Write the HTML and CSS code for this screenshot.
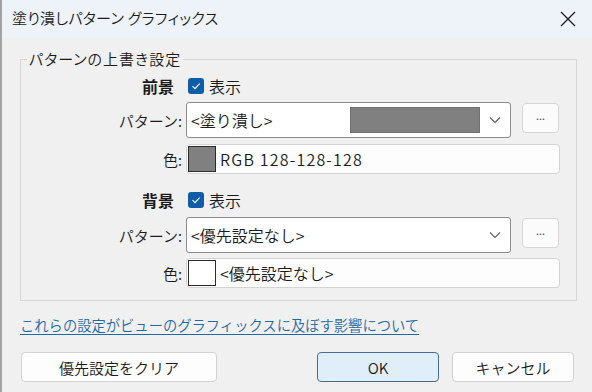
FILE: index.html
```html
<!DOCTYPE html>
<html lang="ja">

<head>
    <meta charset="UTF-8">
    <title>塗り潰しパターン グラフィックス</title>
    <link rel="stylesheet" href="styles.css">
</head>

<body>
    <div class="dialog">
        <header class="titlebar">
            <span class="title">塗り潰しパターン グラフィックス</span>
            <span class="close">
                <svg width="16" height="16" viewBox="0 0 16 16">
                    <path d="M1 1 L15 15 M15 1 L1 15" stroke="#1b1b1b" stroke-width="1.3" fill="none" />
                </svg>
            </span>
        </header>

        <main class="content">
            <fieldset class="group">
                <legend>パターンの上書き設定</legend>

                <div class="row head first">
                    <span class="label bold">前景</span>
                    <span class="check">
                        <svg width="10" height="10" viewBox="0 0 10 10">
                            <path d="M1.5 5.2 L4 7.6 L8.6 2.6" stroke="#fff" stroke-width="1.1" fill="none" />
                        </svg>
                    </span>
                    <span class="checktext">表示</span>
                </div>
                <div class="row pattern">
                    <span class="label">パターン:</span>
                    <div class="select">
                        <span class="value">&lt;塗り潰し&gt;</span>
                        <span class="preview"></span>
                        <span class="chevron">
                            <svg width="12" height="8" viewBox="0 0 12 8">
                                <path d="M1 1.5 L6 6.5 L11 1.5" stroke="#5f5f5f" stroke-width="1.1" fill="none" />
                            </svg>
                        </span>
                    </div>
                    <button class="more">...</button>
                </div>
                <div class="row color">
                    <span class="label">色:</span>
                    <div class="field">
                        <span class="swatch gray"></span>
                        <span class="value rgb">RGB 128-128-128</span>
                    </div>
                </div>

                <div class="row head second">
                    <span class="label bold">背景</span>
                    <span class="check">
                        <svg width="10" height="10" viewBox="0 0 10 10">
                            <path d="M1.5 5.2 L4 7.6 L8.6 2.6" stroke="#fff" stroke-width="1.1" fill="none" />
                        </svg>
                    </span>
                    <span class="checktext">表示</span>
                </div>
                <div class="row pattern">
                    <span class="label">パターン:</span>
                    <div class="select">
                        <span class="value">&lt;優先設定なし&gt;</span>
                        <span class="chevron">
                            <svg width="12" height="8" viewBox="0 0 12 8">
                                <path d="M1 1.5 L6 6.5 L11 1.5" stroke="#5f5f5f" stroke-width="1.1" fill="none" />
                            </svg>
                        </span>
                    </div>
                    <button class="more">...</button>
                </div>
                <div class="row color last">
                    <span class="label">色:</span>
                    <div class="field">
                        <span class="swatch white"></span>
                        <span class="value">&lt;優先設定なし&gt;</span>
                    </div>
                </div>
            </fieldset>

            <a class="link" href="#">これらの設定がビューのグラフィックスに及ぼす影響について</a>

            <footer class="buttons">
                <button class="btn wide">優先設定をクリア</button>
                <span class="spacer"></span>
                <button class="btn primary">OK</button>
                <button class="btn">キャンセル</button>
            </footer>
        </main>
    </div>
</body>

</html>
```

FILE: styles.css
```css
* {
    margin: 0;
    box-sizing: border-box;
}

body {
    width: 592px;
    height: 392px;
    overflow: hidden;
    font-family: "Noto Sans CJK JP", "Noto Sans", sans-serif;
    font-size: 15px;
    font-weight: 350;
    color: #1a1a1a;
    background-color: #f0f0f0;
}

.dialog {
    display: flex;
    flex-direction: column;
    height: 392px;
    border-left: 2px solid #a3a3a3;
}

.titlebar {
    display: flex;
    align-items: center;
    justify-content: space-between;
    height: 38px;
    padding: 0 16px 3px 10px;
    background-color: #edf3f9;
}

.title {
    font-size: 15px;
    line-height: 20px;
    font-feature-settings: "palt";
    letter-spacing: 0.3px;
}

.close {
    display: flex;
    width: 16px;
    height: 16px;
    margin-top: 2px;
}

.content {
    padding: 11px 18px 0 18px;
}

.group {
    width: 557px;
    margin: 0;
    padding: 0 0 12px 0;
    border: 1px solid #d5d5d5;
}

.group legend {
    margin-left: 6px;
    padding: 0 2px;
    line-height: 20px;
    font-feature-settings: "palt";
    letter-spacing: 1px;
}

.row {
    display: flex;
    align-items: center;
}

.label {
    width: 161px;
    margin-right: 4px;
    text-align: right;
    white-space: nowrap;
}

.bold {
    font-weight: bold;
    padding-right: 8px;
    font-size: 16px;
}

.head {
    height: 20px;
}

.head.first {
    margin-top: 7px;
}

.head.second {
    margin-top: 16px;
}

.check {
    display: flex;
    align-items: center;
    justify-content: center;
    width: 16px;
    height: 16px;
    margin-left: 2px;
    border-radius: 3px;
    background-color: #0f5ca8;
}

.checktext {
    margin-left: 5px;
    font-size: 16px;
}

.pattern {
    align-items: flex-start;
    height: 36px;
    margin-top: 6px;
}

.pattern .label {
    align-self: center;
}

.head.second + .pattern {
    margin-top: 7px;
}

.select {
    display: flex;
    align-items: center;
    width: 325px;
    height: 36px;
    padding: 0 0 0 4px;
    border: 1px solid #8c8c8c;
    border-radius: 3px;
    background-color: #fff;
}

.select .value {
    flex-grow: 1;
    font-size: 16px;
}

.preview {
    width: 130px;
    height: 26px;
    background-color: #808080;
    border: 1px solid #6f6f6f;
}

.chevron {
    display: flex;
    justify-content: center;
    width: 30px;
}

.more {
    width: 37px;
    height: 30px;
    margin: 1px 0 0 11px;
    padding: 0 0 6px 0;
    border: 1px solid #d6d6d6;
    border-radius: 4px;
    background-color: #fbfbfb;
    font-family: "Noto Sans", sans-serif;
    font-size: 11px;
    color: #333;
}

.color {
    height: 30px;
    margin-top: 6px;
}

.color.last {
    margin-top: 5px;
}

.field {
    display: flex;
    align-items: center;
    width: 374px;
    height: 30px;
    padding: 0 1px;
    border: 1px solid #d3d3d3;
    border-radius: 4px;
    background-color: #fdfdfd;
}

.field .value {
    margin-left: 4px;
    font-size: 16px;
}

.field .rgb {
    letter-spacing: 1.2px;
}

.swatch {
    width: 28px;
    height: 26px;
    border: 1px solid #2b2b2b;
}

.swatch.gray {
    background-color: #808080;
}

.swatch.white {
    background-color: #fff;
}

.link {
    display: block;
    margin-top: 14px;
    line-height: 20px;
    font-size: 14.3px;
    color: #1e6aa6;
    text-decoration: underline;
    text-underline-offset: 3px;
}

.buttons {
    display: flex;
    margin-top: 17px;
    padding-left: 1px;
}

.spacer {
    flex-grow: 1;
}

.btn {
    width: 122px;
    height: 30px;
    border: 1px solid #d2d2d2;
    border-radius: 4px;
    background-color: #fdfdfd;
    font-family: "Noto Sans CJK JP", "Noto Sans", sans-serif;
    font-size: 15px;
    font-weight: 350;
    color: #1a1a1a;
}

.btn.wide {
    width: 196px;
}

.btn.primary {
    margin-right: 13px;
    border-color: #456d8e;
    background-color: #e0eef9;
}
```
